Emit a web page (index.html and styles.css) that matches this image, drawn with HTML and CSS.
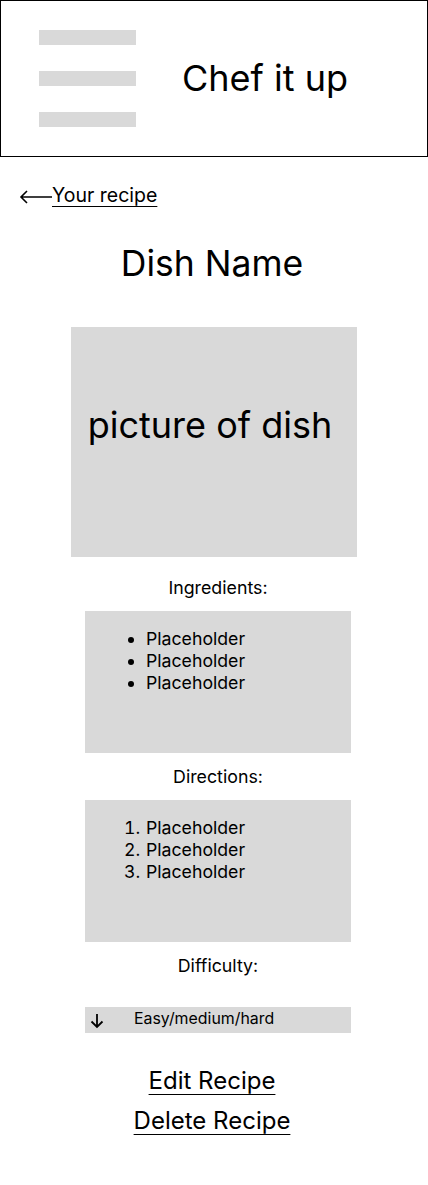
FILE: index.html
```html
<!DOCTYPE html>
<html lang="en">
<head>
<meta charset="utf-8">
<title>Chef it up</title>
<link rel="stylesheet" href="styles.css">
</head>
<body>
<header class="topbar">
  <div class="menu">
    <span class="menu-bar"></span>
    <span class="menu-bar"></span>
    <span class="menu-bar"></span>
  </div>
  <h1 class="brand">Chef it up</h1>
</header>

<nav class="back">
  <svg class="back-arrow" width="33" height="14" viewBox="0 0 33 14" aria-hidden="true">
    <path d="M33 7H2M8 1L2 7l6 6" fill="none" stroke="#000" stroke-width="1.6"/>
  </svg>
  <a class="back-link" href="#">Your recipe</a>
</nav>

<main class="recipe">
  <h2 class="dish-name">Dish Name</h2>
  <div class="photo"><span class="photo-text">picture of dish</span></div>

  <section class="details">
    <h3 class="section-title first">Ingredients:</h3>
    <div class="panel">
      <ul class="list">
        <li>Placeholder</li>
        <li>Placeholder</li>
        <li>Placeholder</li>
      </ul>
    </div>

    <h3 class="section-title">Directions:</h3>
    <div class="panel">
      <ol class="list numbered">
        <li>Placeholder</li>
        <li>Placeholder</li>
        <li>Placeholder</li>
      </ol>
    </div>

    <h3 class="section-title">Difficulty:</h3>
    <div class="select">
      <svg class="select-arrow" width="14" height="16" viewBox="0 0 14 16" aria-hidden="true">
        <path d="M7 1v13M1.5 8.5L7 14l5.5-5.5" fill="none" stroke="#000" stroke-width="1.8"/>
      </svg>
      <span class="select-text">Easy/medium/hard</span>
    </div>
  </section>

  <div class="actions">
    <a class="action" href="#">Edit Recipe</a>
    <a class="action" href="#">Delete Recipe</a>
  </div>
</main>
</body>
</html>
```

FILE: styles.css
```css
* { box-sizing: border-box; }

html, body {
  margin: 0;
  padding: 0;
  background: #fff;
  color: #000;
  font-family: Inter, "Noto Sans", sans-serif;
}

.topbar {
  height: 157px;
  border: 1px solid #000;
  display: flex;
  align-items: center;
  padding-left: 38px;
}

.menu {
  display: flex;
  flex-direction: column;
  gap: 26px;
  width: 97px;
}

.menu-bar {
  display: block;
  height: 15px;
  background: #d9d9d9;
}

.brand {
  margin: 0 0 0 46px;
  font-size: 36px;
  font-weight: 400;
  line-height: 1;
  position: relative;
  top: -1px;
}

.back {
  display: flex;
  align-items: center;
  padding: 27px 0 0 19px;
  height: 53px;
}

.back-arrow { display: block; }

.back-link {
  color: #000;
  font-size: 19.5px;
  text-decoration: underline;
  text-underline-offset: 4px;
  text-decoration-thickness: 1px;
  line-height: 22px;
  margin-top: -5px;
}

.recipe {
  display: flex;
  flex-direction: column;
  align-items: center;
}

.dish-name {
  margin: 33px 4px 0 0;
  font-size: 35.5px;
  font-weight: 400;
  line-height: 42px;
}

.photo {
  margin-top: 42px;
  width: 286px;
  height: 230px;
  background: #d9d9d9;
  padding-top: 76px;
  text-align: center;
}

.photo-text {
  display: inline-block;
  font-size: 36px;
  line-height: 44px;
  margin-left: -8px;
}

.details {
  display: flex;
  flex-direction: column;
  align-items: center;
  margin-left: 8px;
}

.section-title {
  margin: 0;
  font-size: 17.8px;
  font-weight: 400;
  line-height: 22px;
}

.section-title.first { margin-top: 20px; }

.panel {
  margin-top: 12px;
  width: 266px;
  height: 142px;
  background: #d9d9d9;
  padding-top: 17px;
  margin-bottom: 13px;
}

.list {
  margin: 0;
  padding-left: 61px;
  font-size: 17.7px;
  line-height: 22px;
}

.numbered { padding-left: 60px; }
.numbered li { padding-left: 1px; }

.select {
  margin-top: 30px;
  width: 266px;
  height: 26px;
  background: #d9d9d9;
  display: flex;
  align-items: center;
  padding-left: 5px;
}

.select-arrow { display: block; margin-top: 2px; }

.select-text {
  font-size: 15.9px;
  margin-left: 30px;
  margin-top: -4px;
}

.actions {
  margin: 33px 4px 0 0;
  display: flex;
  flex-direction: column;
  align-items: center;
  gap: 10px;
}

.action {
  color: #000;
  font-size: 24px;
  line-height: 30px;
  text-decoration: underline;
  text-underline-offset: 5px;
  text-decoration-thickness: 1px;
}
```
